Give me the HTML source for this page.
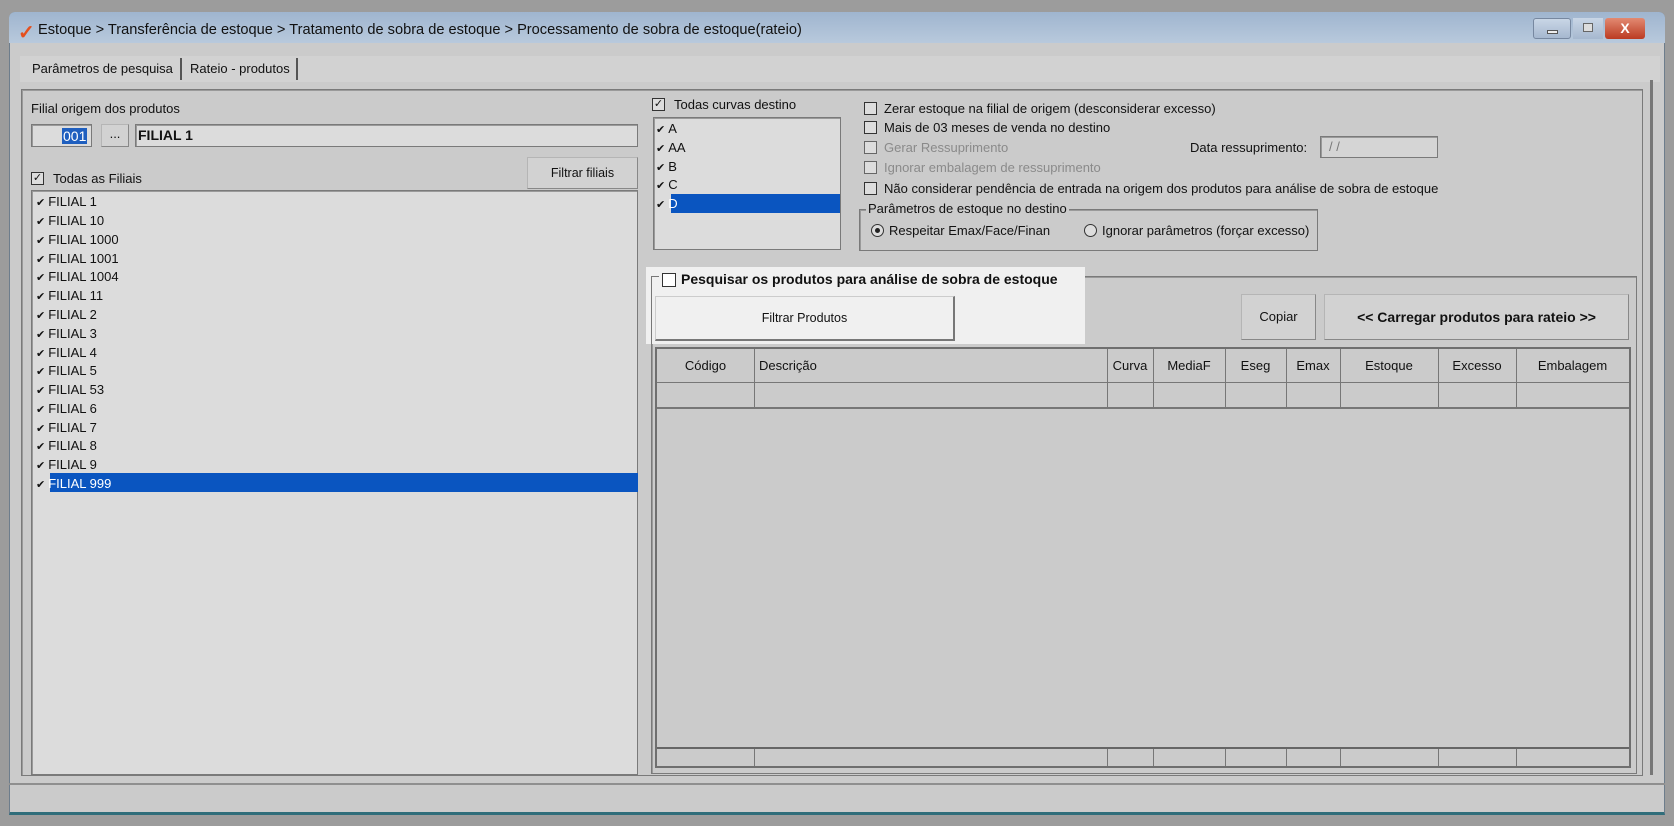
<!DOCTYPE html>
<html><head><meta charset="utf-8"><style>
*{box-sizing:border-box;margin:0;padding:0}
body{width:1674px;height:826px;background:#9c9c9c;position:relative;overflow:hidden;font-family:"Liberation Sans",sans-serif;font-size:13px;color:#111}
.a{position:absolute}
.win{left:9px;top:12px;width:1656px;height:803px;background:#cbcbcb;border:1px solid #6d7d8c;border-bottom:3px solid #2f6d7a;border-radius:6px 6px 0 0}
.title{left:9px;top:12px;width:1656px;height:31px;background:linear-gradient(#9fb5cf,#b8c9dc);border-radius:6px 6px 0 0}
.box{border:1px solid #7a7a7a;box-shadow:inset 1px 1px 0 #9a9a9a}
.chk{width:13px;height:13px;border:1px solid #333;background:#ddd;font-size:11px;line-height:11px;text-align:center}
.btn{background:#d2d2d2;border:1px solid #b5b5b5;border-right-color:#888;border-bottom-color:#888;text-align:center}
.li{position:absolute;left:4px;height:19px;line-height:19px;font-size:13px}
.li b{font-weight:normal;font-size:11px;margin-right:3px}
.gl{position:absolute;top:0;bottom:0;width:1px;background:#777}
.hd{position:absolute;top:0;height:34px;line-height:34px;text-align:center;font-size:13px}
</style></head><body>
<div class="a win"></div>
<div class="a title"></div>
<div class="a" style="left:18px;top:20px;color:#e5501e;font-size:20px;font-weight:bold">✓</div>
<div class="a" style="left:38px;top:22px;font-size:14.6px;color:#111">Estoque &gt; Transferência de estoque &gt; Tratamento de sobra de estoque &gt; Processamento de sobra de estoque(rateio)</div>
<div class="a" style="left:1533px;top:18px;width:38px;height:21px;border:1px solid #7788a0;border-radius:3px;background:linear-gradient(#c9d6e6,#a6b8cf)"><div class="a" style="left:13px;top:11px;width:11px;height:4px;border:1px solid #555;background:#eee"></div></div>
<div class="a" style="left:1573px;top:18px;width:30px;height:21px;background:linear-gradient(#c9d6e6,#a6b8cf)"><div class="a" style="left:10px;top:5px;width:10px;height:9px;border:1px solid #666;background:#ddd"></div></div>
<div class="a" style="left:1605px;top:18px;width:40px;height:21px;border-radius:3px;background:linear-gradient(#e28a72,#bb3b22);color:#fff;font-weight:bold;text-align:center;line-height:21px;font-size:14px">X</div>

<div class="a" style="left:20px;top:56px;width:1640px;height:26px;background:#d2d2d2"></div>
<div class="a" style="left:32px;top:61px">Parâmetros de pesquisa</div>
<div class="a" style="left:180px;top:58px;width:2px;height:22px;background:#555"></div>
<div class="a" style="left:190px;top:61px">Rateio - produtos</div>
<div class="a" style="left:296px;top:58px;width:2px;height:22px;background:#555"></div>

<div class="a box" style="left:21px;top:89px;width:1622px;height:687px;background:#cbcbcb"></div>
<div class="a" style="left:1650px;top:80px;width:3px;height:695px;background:#777"></div>
<div class="a" style="left:9px;top:783px;width:1656px;height:2px;background:#8f8f8f"></div>

<div class="a" style="left:31px;top:101px">Filial origem dos produtos</div>
<div class="a box" style="left:31px;top:124px;width:61px;height:23px;background:#dcdcdc"><span class="a" style="left:30px;top:3px;background:#1f5fbf;color:#fff;padding:0 1px;font-size:14px">001</span></div>
<div class="a btn" style="left:101px;top:124px;width:28px;height:23px;line-height:18px">...</div>
<div class="a box" style="left:135px;top:124px;width:503px;height:23px;background:#dcdcdc;font-weight:bold;font-size:14px;padding:2px 2px">FILIAL 1</div>

<div class="a chk" style="left:31px;top:172px">✓</div>
<div class="a" style="left:53px;top:171px">Todas as Filiais</div>
<div class="a btn" style="left:527px;top:157px;width:111px;height:32px;line-height:30px;font-size:12.5px">Filtrar filiais</div>
<div class="a box" style="left:31px;top:190px;width:607px;height:585px;background:#dcdcdc">
<div class="a" style="left:18px;top:282px;width:588px;height:19px;background:#0a55c0"></div>
<div class="li" style="top:1px"><b>✔</b>FILIAL 1</div>
<div class="li" style="top:20px"><b>✔</b>FILIAL 10</div>
<div class="li" style="top:39px"><b>✔</b>FILIAL 1000</div>
<div class="li" style="top:58px"><b>✔</b>FILIAL 1001</div>
<div class="li" style="top:76px"><b>✔</b>FILIAL 1004</div>
<div class="li" style="top:95px"><b>✔</b>FILIAL 11</div>
<div class="li" style="top:114px"><b>✔</b>FILIAL 2</div>
<div class="li" style="top:133px"><b>✔</b>FILIAL 3</div>
<div class="li" style="top:152px"><b>✔</b>FILIAL 4</div>
<div class="li" style="top:170px"><b>✔</b>FILIAL 5</div>
<div class="li" style="top:189px"><b>✔</b>FILIAL 53</div>
<div class="li" style="top:208px"><b>✔</b>FILIAL 6</div>
<div class="li" style="top:227px"><b>✔</b>FILIAL 7</div>
<div class="li" style="top:245px"><b>✔</b>FILIAL 8</div>
<div class="li" style="top:264px"><b>✔</b>FILIAL 9</div>
<div class="li" style="top:283px"><b>✔</b><span style="color:#fff">FILIAL 999</span></div>
</div>

<div class="a chk" style="left:652px;top:98px">✓</div>
<div class="a" style="left:674px;top:97px">Todas curvas destino</div>
<div class="a box" style="left:653px;top:117px;width:188px;height:133px;background:#dcdcdc">
<div class="a" style="left:17px;top:76px;width:169px;height:19px;background:#0a55c0"></div>
<div class="li" style="top:1px;left:2px"><b>✔</b>A</div>
<div class="li" style="top:20px;left:2px"><b>✔</b>AA</div>
<div class="li" style="top:39px;left:2px"><b>✔</b>B</div>
<div class="li" style="top:57px;left:2px"><b>✔</b>C</div>
<div class="li" style="top:76px;left:2px"><b>✔</b><span style="color:#fff">D</span></div>
</div>

<div class="a chk" style="left:864px;top:102px"></div><div class="a" style="left:884px;top:101px">Zerar estoque na filial de origem (desconsiderar excesso)</div>
<div class="a chk" style="left:864px;top:121px"></div><div class="a" style="left:884px;top:120px">Mais de 03 meses de venda no destino</div>
<div class="a chk" style="left:864px;top:141px;border-color:#666"></div><div class="a" style="left:884px;top:140px;color:#8a8a8a">Gerar Ressuprimento</div>
<div class="a chk" style="left:864px;top:161px;border-color:#666"></div><div class="a" style="left:884px;top:160px;color:#8a8a8a">Ignorar embalagem de ressuprimento</div>
<div class="a chk" style="left:864px;top:182px"></div><div class="a" style="left:884px;top:181px">Não considerar pendência de entrada na origem dos produtos para análise de sobra de estoque</div>
<div class="a" style="left:1190px;top:140px">Data ressuprimento:</div>
<div class="a box" style="left:1320px;top:136px;width:118px;height:22px;background:#d5d5d5;color:#777;padding:2px 8px">/ /</div>
<div class="a box" style="left:859px;top:209px;width:459px;height:42px"></div>
<div class="a" style="left:866px;top:201px;background:#cbcbcb;padding:0 2px">Parâmetros de estoque no destino</div>
<div class="a" style="left:871px;top:224px;width:13px;height:13px;border:1px solid #333;border-radius:50%;background:#ddd"><div class="a" style="left:3px;top:3px;width:5px;height:5px;border-radius:50%;background:#222"></div></div>
<div class="a" style="left:889px;top:223px">Respeitar Emax/Face/Finan</div>
<div class="a" style="left:1084px;top:224px;width:13px;height:13px;border:1px solid #333;border-radius:50%;background:#ddd"></div>
<div class="a" style="left:1102px;top:223px">Ignorar parâmetros (forçar excesso)</div>

<div class="a box" style="left:651px;top:276px;width:986px;height:498px"></div>
<div class="a" style="left:646px;top:267px;width:439px;height:77px;background:#f0f0f0"></div>
<div class="a" style="left:651px;top:276px;width:8px;height:1px;background:#777"></div>
<div class="a" style="left:651px;top:276px;width:1px;height:68px;background:#777"></div>
<div class="a chk" style="left:662px;top:273px;width:14px;height:14px;background:#fff"></div>
<div class="a" style="left:681px;top:271px;font-weight:bold;font-size:14px">Pesquisar os produtos para análise de sobra de estoque</div>
<div class="a" style="left:655px;top:296px;width:300px;height:45px;background:#f0f0f0;border:1px solid #ccc;border-right:2px solid #777;border-bottom:2px solid #777;text-align:center;line-height:42px;font-size:12.5px">Filtrar Produtos</div>
<div class="a btn" style="left:1241px;top:294px;width:75px;height:46px;line-height:44px">Copiar</div>
<div class="a btn" style="left:1324px;top:294px;width:305px;height:46px;line-height:44px;font-weight:bold;font-size:14px">&lt;&lt; Carregar produtos para rateio &gt;&gt;</div>

<div class="a" style="left:655px;top:347px;width:976px;height:421px;border:2px solid #6f6f6f;background:#cbcbcb">
<div class="a" style="left:0;right:0;top:33px;height:1px;background:#777"></div>
<div class="a" style="left:0;right:0;top:58px;height:2px;background:#777"></div>
<div class="a" style="left:0;right:0;top:398px;height:2px;background:#666"></div>
<div style="position:absolute;left:0;right:0;top:0;height:58px">
<div class="gl" style="left:97px"></div><div class="gl" style="left:450px"></div><div class="gl" style="left:496px"></div><div class="gl" style="left:568px"></div><div class="gl" style="left:629px"></div><div class="gl" style="left:683px"></div><div class="gl" style="left:781px"></div><div class="gl" style="left:859px"></div>
</div>
<div style="position:absolute;left:0;right:0;top:400px;bottom:0">
<div class="gl" style="left:97px"></div><div class="gl" style="left:450px"></div><div class="gl" style="left:496px"></div><div class="gl" style="left:568px"></div><div class="gl" style="left:629px"></div><div class="gl" style="left:683px"></div><div class="gl" style="left:781px"></div><div class="gl" style="left:859px"></div>
</div>
<div class="hd" style="left:0;width:97px">Código</div>
<div class="hd" style="left:102px;text-align:left">Descrição</div>
<div class="hd" style="left:450px;width:46px">Curva</div>
<div class="hd" style="left:496px;width:72px">MediaF</div>
<div class="hd" style="left:568px;width:61px">Eseg</div>
<div class="hd" style="left:629px;width:54px">Emax</div>
<div class="hd" style="left:683px;width:98px">Estoque</div>
<div class="hd" style="left:781px;width:78px">Excesso</div>
<div class="hd" style="left:859px;width:113px">Embalagem</div>
</div>
</body></html>
